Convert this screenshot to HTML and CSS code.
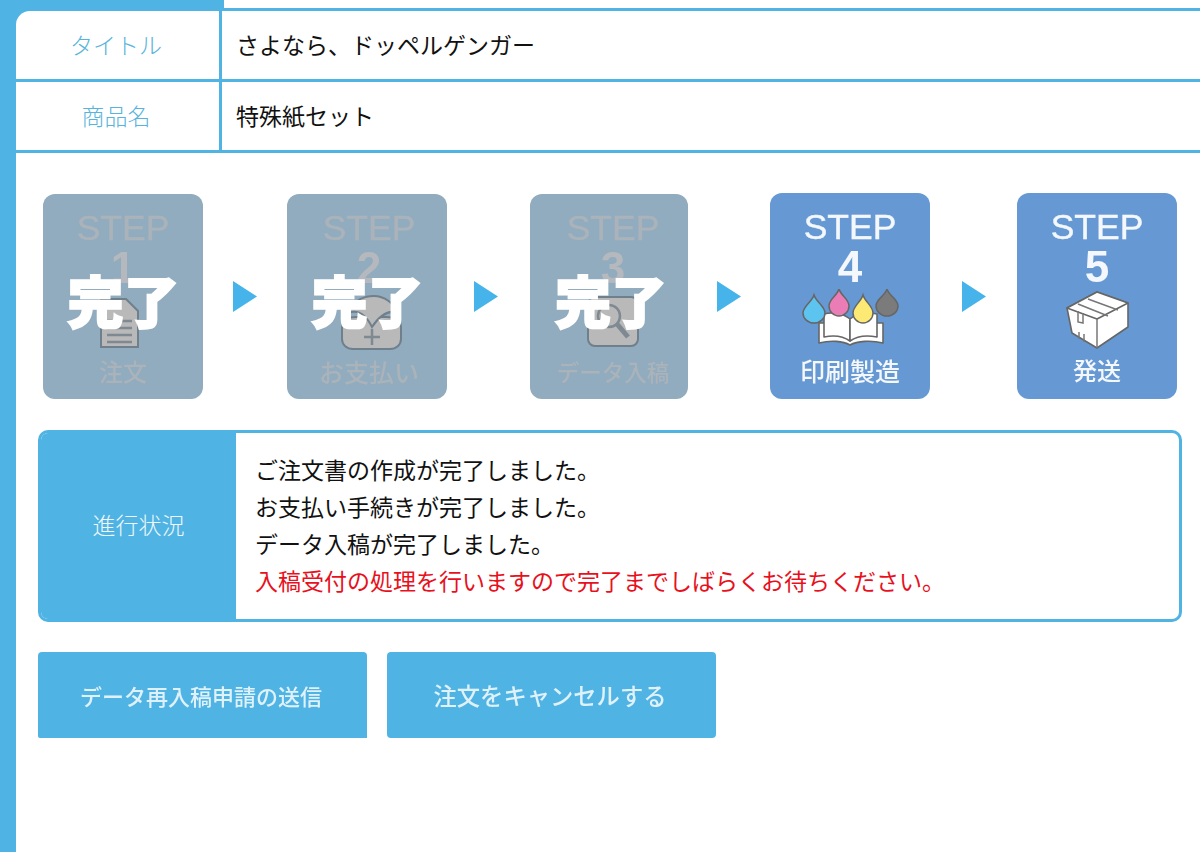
FILE: index.html
```html
<!DOCTYPE html>
<html lang="ja">
<head>
<meta charset="utf-8"/>
<meta name="viewport" content="width=device-width,initial-scale=1"/>
<title>注文状況</title>
<link rel="stylesheet" href="styles.css">
</head>
<body>
<div class="page">
  <div class="side"></div>
  <div class="main">
    <div class="tab"></div>
    <div class="info">
      <div class="info-label first">タイトル</div>
      <div class="info-val">さよなら、ドッペルゲンガー</div>
      <div class="info-label">商品名</div>
      <div class="info-val">特殊紙セット</div>
    </div>

    <div class="steps">
      <div class="step done">
        <div class="step-t">STEP</div>
        <div class="step-n">1</div>
        <div class="step-i">
          <svg class="shift-l" width="44" height="60" viewBox="0 0 44 60">
            <path class="ic-fill" d="M5 8H30L42 20V56H5Z"/>
            <path class="ic-line" d="M11 30H36M11 37H36M11 44H36M11 51H36"/>
          </svg>
        </div>
        <div class="step-l">注文</div>
        <div class="done-mark">完了</div>
      </div>
      <svg class="arrow" width="24" height="31" viewBox="0 0 24 31"><path d="M0 0L24 15.5L0 31Z"/></svg>

      <div class="step done off2">
        <div class="step-t">STEP</div>
        <div class="step-n">2</div>
        <div class="step-i">
          <svg class="shift" width="70" height="60" viewBox="0 0 70 60">
            <path class="ic-fill" d="M6 36C6 28 14 26 20 26H50C58 26 65 28 65 36V48C65 54 60 58 54 58H17C11 58 6 54 6 48Z"/>
            <path class="ic-fill" d="M12 22C18 8 30 5 38 5C48 5 58 12 62 22C52 18 44 24 36 36C30 24 22 18 12 22Z"/>
            <path class="ic-line" d="M36 38V54M28 46H44"/>
          </svg>
        </div>
        <div class="step-l wide">お支払い</div>
        <div class="done-mark">完了</div>
      </div>
      <svg class="arrow a2" width="24" height="31" viewBox="0 0 24 31"><path d="M0 0L24 15.5L0 31Z"/></svg>

      <div class="step done off3">
        <div class="step-t">STEP</div>
        <div class="step-n">3</div>
        <div class="step-i">
          <svg width="56" height="56" viewBox="0 0 56 56">
            <rect class="ic-fill" x="3" y="4" width="50" height="49" rx="7"/>
            <circle class="ic-line" cx="24" cy="23" r="11"/>
            <path class="ic-line wide" d="M32 31L43 44"/>
          </svg>
        </div>
        <div class="step-l tight">データ入稿</div>
        <div class="done-mark">完了</div>
      </div>
      <svg class="arrow" width="24" height="31" viewBox="0 0 24 31"><path d="M0 0L24 15.5L0 31Z"/></svg>

      <div class="step now">
        <div class="step-t">STEP</div>
        <div class="step-n">4</div>
        <div class="step-i">
          <svg width="98" height="62" viewBox="0 0 98 62">
            <path class="bk" d="M18 34V54C30 51 42 52 49 56C56 52 70 51 82 54V34Z"/>
            <path class="bk" d="M49 30C42 24 31 23 23 25V48C33 46 42 47 49 52Z"/>
            <path class="bk" d="M49 30C56 24 67 23 76 25V48C66 46 56 47 49 52Z"/>
            <path class="drop cy" d="M13 6C15 13 24 17 24 24A11 10 0 0 1 2 24C2 17 11 13 13 6Z"/>
            <path class="drop mg" d="M38 0C40 7 48 10 48 17A10 10 0 0 1 28 17C28 10 36 7 38 0Z"/>
            <path class="drop ye" d="M62 6C64 13 72 17 72 24A10 10 0 0 1 52 24C52 17 60 13 62 6Z"/>
            <path class="drop gy" d="M86 0C88 7 97 10 97 17A11 10 0 0 1 75 17C75 10 84 7 86 0Z"/>
          </svg>
        </div>
        <div class="step-l wide">印刷製造</div>
      </div>
      <svg class="arrow" width="24" height="31" viewBox="0 0 24 31"><path d="M0 0L24 15.5L0 31Z"/></svg>

      <div class="step now">
        <div class="step-t">STEP</div>
        <div class="step-n">5</div>
        <div class="step-i">
          <svg width="66" height="60" viewBox="0 0 66 60">
            <path class="bk" d="M33 2L64 13V37L33 58L8 43L3 18Z"/>
            <path class="bk" d="M3 18L33 29L64 13L33 2Z"/>
            <path class="bk-line" d="M33 29V58M14 14L44 26M24 9L54 20"/>
            <path class="bk-line" d="M14 21V32L19 33V23M15 42V49M20 44V52"/>
          </svg>
        </div>
        <div class="step-l">発送</div>
      </div>
    </div>

    <div class="status">
      <div class="status-label">進行状況</div>
      <div class="status-body">
        <div>ご注文書の作成が完了しました。</div>
        <div>お支払い手続きが完了しました。</div>
        <div>データ入稿が完了しました。</div>
        <div class="red">入稿受付の処理を行いますので完了までしばらくお待ちください。</div>
      </div>
    </div>

    <div class="btns">
      <a class="btn small">データ再入稿申請の送信</a>
      <a class="btn">注文をキャンセルする</a>
    </div>
  </div>
</div>
</body>
</html>
```

FILE: styles.css
```css
body{margin:0;background:#fff;color:#111;font-family:"Noto Sans CJK JP","Liberation Sans",sans-serif}
.page{display:flex;min-height:852px;overflow:hidden}
.side{width:16px;flex:none;background:#4fb3e3}
.main{flex:1;min-width:0}
.tab{width:208px;height:8px;background:#4fb3e3}

.info{display:grid;grid-template-columns:203px 1fr;grid-auto-rows:68px;gap:3px;padding:3px 0;background:#4fb3e3;font-size:23px}
.info-label{display:flex;align-items:center;justify-content:center;padding:0 3px 3px 0;background:#fff;color:#58b4dc;font-weight:300}
.info-label.first{border-top-left-radius:14px}
.info-val{display:flex;align-items:center;padding:0 0 3px 14px;background:#fff;color:#111}

.steps{display:grid;grid-template-columns:160px 84px 160px 83px 158px 82px 160px 87px 160px;margin:40px 0 0 27px;align-items:end}
.arrow{justify-self:center;align-self:center;filter:blur(.4px)}
.arrow.a2{margin-right:5px}
.arrow path{fill:#46b4ea}
.step{position:relative;height:206px;box-sizing:border-box;padding-top:14px;border-radius:12px;text-align:center;overflow:hidden;filter:blur(.6px)}
.step.now{background:#6699d3;color:#f4f8fc}
.step.done{height:205px;background:#91abbf;color:#abb3ba}
.step.off2{padding-left:4px}
.step.off3{padding-left:8px}
.step-t{height:40px;font:35.5px/40px "Liberation Sans",sans-serif;-webkit-text-stroke:.4px currentColor}
.step-n{height:40px;font:bold 44px/40px "Liberation Sans",sans-serif}
.done .step-n{color:#b5b9bd}
.step-i{display:flex;height:65px;align-items:center;justify-content:center}
.step-l{font-size:24px;line-height:36px;font-weight:500;white-space:nowrap}
.step-l.wide{font-size:25px}
.step-l.tight{font-size:22.5px}
.done-mark{position:absolute;left:1px;right:0;top:75px;color:#fff;font-size:56px;font-weight:900;line-height:60px;-webkit-text-stroke:2px #fff}
.off3 .done-mark{left:4px}
.shift-l{margin-right:10px}
.shift{margin-left:4px}

.ic-fill{fill:#b9b9b9;stroke:#6f7f8c;stroke-width:2}
.ic-line{fill:none;stroke:#7f8992;stroke-width:2.5}
.ic-line.wide{stroke-width:5}
.bk{fill:#fff;stroke:#666;stroke-width:1.6;stroke-linejoin:round}
.bk-line{fill:none;stroke:#777;stroke-width:1.5}
.drop{stroke:#666;stroke-width:1.5}
.cy{fill:#5cc4ee}
.mg{fill:#ea7db5}
.ye{fill:#fdea74}
.gy{fill:#7b7b7b}

.status{display:flex;width:1144px;height:192px;box-sizing:border-box;margin:31px 0 0 22px;border:3px solid #4fb3e3;border-radius:10px;overflow:hidden}
.status-label{display:flex;width:195px;flex:none;align-items:center;justify-content:center;padding-bottom:4px;box-sizing:border-box;background:#4fb3e3;color:#f0f8fc;font-size:23px;font-weight:300}
.status-body{padding-top:18px;padding-left:19px;font-size:23px;line-height:37px}
.red{color:#e8101c}

.btns{display:flex;gap:20px;margin:30px 0 0 22px}
.btn{display:flex;width:329px;height:86px;box-sizing:border-box;padding-right:3px;align-items:center;justify-content:center;border-radius:4px;background:#4fb3e3;color:#dff1fa;font-size:23.3px;font-weight:500;filter:blur(.6px)}
.btn.small{font-size:22px;border-radius:4px 4px 0 2px}
```
